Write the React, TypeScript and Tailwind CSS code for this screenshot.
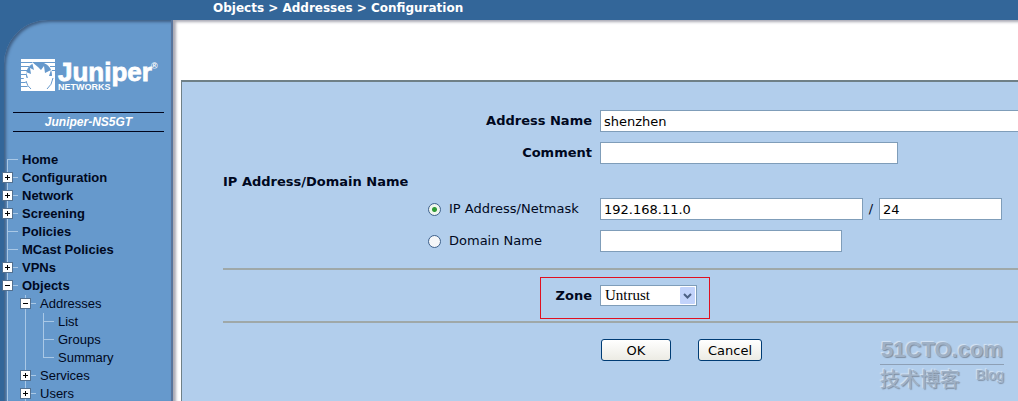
import { useState } from "react";

type Guide = "line" | "tee" | "end" | "first" | "plus" | "minus";
type Item = { label: string; guides: Guide[]; bold?: boolean };

const items: Item[] = [
  { label: "Home", guides: ["first"], bold: true },
  { label: "Configuration", guides: ["plus"], bold: true },
  { label: "Network", guides: ["plus"], bold: true },
  { label: "Screening", guides: ["plus"], bold: true },
  { label: "Policies", guides: ["tee"], bold: true },
  { label: "MCast Policies", guides: ["tee"], bold: true },
  { label: "VPNs", guides: ["plus"], bold: true },
  { label: "Objects", guides: ["minus"], bold: true },
  { label: "Addresses", guides: ["line", "minus"] },
  { label: "List", guides: ["line", "line", "tee"] },
  { label: "Groups", guides: ["line", "line", "tee"] },
  { label: "Summary", guides: ["line", "line", "end"] },
  { label: "Services", guides: ["line", "plus"] },
  { label: "Users", guides: ["line", "plus"] },
];

function GuideCell({ kind }: { kind: Guide }) {
  const top = kind === "first" ? 8 : 0;
  const bottom = kind === "end" ? 9 : 18;
  const boxed = kind === "plus" || kind === "minus";
  return (
    <svg width="18" height="18" viewBox="0 0 18 18" shapeRendering="crispEdges" className="shrink-0" aria-hidden="true">
      <rect x="7" y={top} width="1" height={bottom - top} fill="#a9c8e6" />
      {kind !== "line" && <rect x="7" y="8" width="11" height="1" fill="#a9c8e6" />}
      {boxed && (
        <>
          <rect x="2" y="3" width="11" height="11" fill="#53708f" />
          <rect x="3" y="4" width="9" height="9" fill="#fff" />
          <rect x="5" y="8" width="5" height="1" fill="#000" />
          {kind === "plus" && <rect x="7" y="6" width="1" height="5" fill="#000" />}
        </>
      )}
    </svg>
  );
}

function JuniperLogo() {
  return (
    <svg width="144" height="44" viewBox="0 0 144 44" role="img" aria-label="Juniper Networks" className="ml-4">
      <rect x="1" y="7" width="34" height="32" fill="#fff" />
      <path
        d="M1 10.500h34M1 14.500h8M1 18.500h6M1 22.500h5M1 26.500h5M1 30.500h6M1 34.500h8M30 14.500h5M32 18.500h3"
        fill="none"
        stroke="#6699cc"
      />
      <circle cx="19" cy="23" r="13" fill="#6699cc" />
      <path
        d="M9 38 L7 33 L3 25 L8 26 L6 20 L11 22 L10 16 L14 18 L12 10 L18 15 L21 18 L24 14 L25 21 L31 18 L29 24 L34 24 L31 29 L34 31 L30 34 L29 38 Z"
        fill="#fff"
      />
      <path d="M6 29Q7 34 11 37M33 26Q32 33 27 37" fill="none" stroke="#6699cc" />
      <g fill="#fff" fontFamily="'Liberation Sans', Arial, sans-serif" fontWeight="700">
        <text x="38" y="29" fontSize="26" stroke="#fff" strokeWidth="0.8">Juniper</text>
        <text x="38" y="38" fontSize="9">NETWORKS</text>
        <text x="131" y="17" fontSize="9">®</text>
      </g>
    </svg>
  );
}

const field =
  "block h-[22px] min-w-0 border border-[#7f9db9] bg-white px-[3px] text-[13px] text-black outline-none";
const radio =
  "size-[13px] shrink-0 appearance-none rounded-full border border-[#3c5f8a] bg-[#f4f6f8] checked:bg-[radial-gradient(circle,#2f9a35_0_2px,#f0f6ee_3px)]";
const action =
  "h-[22px] rounded-[3px] border border-[#003c74] bg-linear-to-b from-white to-[#ecebe4] text-[13px] leading-none text-black";

export default function App() {
  const [mode, setMode] = useState("ip");

  return (
    <div className="flex h-screen flex-col overflow-hidden bg-[#336699] font-['DejaVu_Sans',Verdana,sans-serif] text-[13px] text-[#000820]">
      <header className="h-5 shrink-0 pl-[213px] text-[12px] leading-4 font-bold whitespace-nowrap text-white">
        Objects &gt; Addresses &gt; Configuration
      </header>

      <div className="flex min-h-0 flex-1">
        <aside className="w-[173px] shrink-0 pl-1">
          <div className="h-full rounded-tl-[44px] border-r-2 border-[#58749c] bg-[#6699cc] pt-8 shadow-[inset_2px_2px_3px_#3f5f85]">
            <JuniperLogo />
            <div className="mt-4 mr-[7px] ml-[9px] border-y border-[#00051c] py-px text-center font-['Liberation_Sans',Arial,sans-serif] text-[12px] leading-4 font-bold text-white italic">
              Juniper-NS5GT
            </div>
            <nav className="mt-[19px] -ml-1 font-['Liberation_Sans',Arial,sans-serif] text-[13px]">
              <ul>
                {items.map((item) => (
                  <li key={item.label} className="flex h-[18px] items-center">
                    {item.guides.map((g, i) => (
                      <GuideCell key={i} kind={g} />
                    ))}
                    <a href="#" className={item.bold ? "ml-1 font-bold" : "ml-1"}>
                      {item.label}
                    </a>
                  </li>
                ))}
              </ul>
            </nav>
          </div>
        </aside>

        <main className="relative flex min-w-0 flex-1 flex-col bg-white pt-[60px] pl-2 shadow-[inset_3px_2px_3px_#a9a9b4]">
          <form
            className="flex-1 overflow-hidden border-t-2 border-l border-[#6f8087] bg-[#b2ceec] pt-7 pl-[41px]"
            onSubmit={(e) => e.preventDefault()}
          >
            <div className="grid grid-cols-[369px_1fr] items-center gap-x-2 gap-y-[10px]">
              <label htmlFor="name" className="text-right leading-[22px] font-bold">Address Name</label>
              <input id="name" className={`${field} w-full border-r-0`} defaultValue="shenzhen" />
              <label htmlFor="comment" className="text-right leading-[22px] font-bold">Comment</label>
              <input id="comment" className={`${field} w-[298px]`} />
            </div>

            <h2 className="mt-2 text-[13px] leading-5 font-bold">IP Address/Domain Name</h2>

            <div className="mt-[6px] grid grid-cols-[369px_1fr] items-center gap-x-2 gap-y-[10px]">
              <label className="flex items-center gap-2 pl-[205px] leading-[22px] whitespace-nowrap">
                <input type="radio" name="mode" className={radio} checked={mode === "ip"} onChange={() => setMode("ip")} />
                IP Address/Netmask
              </label>
              <div className="flex items-center">
                <input aria-label="IP address" className={`${field} w-[263px]`} defaultValue="192.168.11.0" />
                <span className="w-4 text-center leading-[22px]">/</span>
                <input aria-label="Netmask" className={`${field} w-[123px]`} defaultValue="24" />
              </div>
              <label className="flex items-center gap-2 pl-[205px] leading-[22px] whitespace-nowrap">
                <input type="radio" name="mode" className={radio} checked={mode === "domain"} onChange={() => setMode("domain")} />
                Domain Name
              </label>
              <input aria-label="Domain name" className={`${field} w-[242px]`} />
            </div>

            <hr className="mt-4 border-t-2 border-[#9fa8a8]" />
            <div className="mt-[7px] ml-[317px] flex h-[42px] w-[170px] items-start justify-end gap-2 border border-[#e01020] pt-[7px] pr-3">
              <label htmlFor="zone" className="leading-[22px] font-bold">Zone</label>
              <div className="relative">
                <select
                  id="zone"
                  className="block h-[21px] w-[97px] appearance-none border border-[#7f9db9] bg-white pl-1 font-['Liberation_Serif','Noto_Sans_CJK_SC',serif] text-[15px] leading-none text-black"
                >
                  <option>Untrust</option>
                  <option>Trust</option>
                </select>
                <svg width="15" height="17" viewBox="0 0 15 17" className="pointer-events-none absolute top-[2px] right-[2px]" aria-hidden="true">
                  <rect width="15" height="17" rx="1" fill="#c2d3fb" />
                  <path d="M4 7l3.500 3.500L11 7" fill="none" stroke="#4d6185" strokeWidth="2" />
                </svg>
              </div>
            </div>
            <hr className="mt-[2px] border-t-2 border-[#9fa8a8]" />

            <div className="mt-4 ml-[378px] flex gap-[27px]">
              <button type="submit" className={`${action} w-[70px]`}>OK</button>
              <button type="button" className={`${action} w-[64px]`}>Cancel</button>
            </div>
          </form>

          <div className="pointer-events-none absolute right-[14px] bottom-2 w-[124px] text-[#9fb1c6] [text-shadow:1px_1px_1px_#7f8fa3,-1px_-1px_1px_#d5e4f4]">
            <div className="border-b border-[#8d9fb5] text-center font-['Liberation_Sans_Narrow','Liberation_Sans',sans-serif] text-[22px] leading-7 font-bold">
              51CTO.com
            </div>
            <div className="flex items-start justify-between">
              <span className="font-['Noto_Sans_CJK_SC',sans-serif] text-[20px] leading-7">技术博客</span>
              <span className="font-['Liberation_Sans',sans-serif] text-[14px] leading-5">Blog</span>
            </div>
          </div>
        </main>
      </div>
    </div>
  );
}
